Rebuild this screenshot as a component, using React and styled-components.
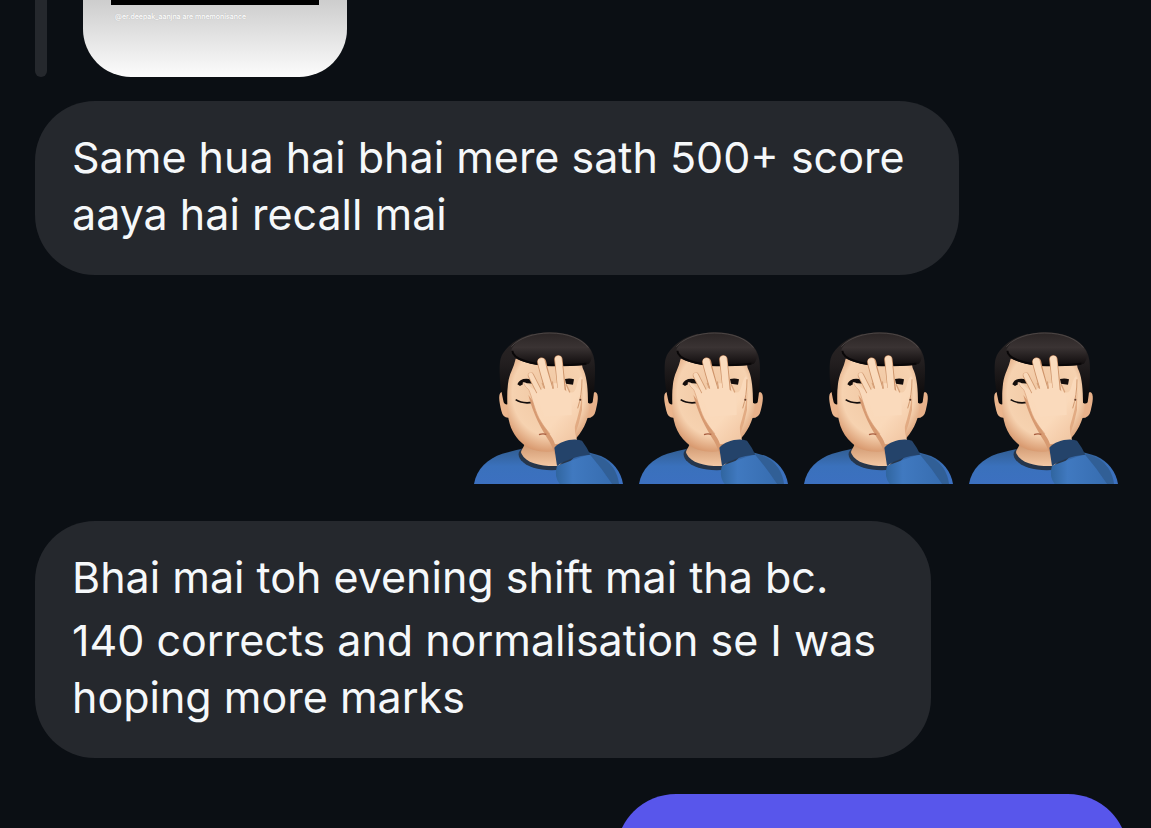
import React, { useId } from 'react'
import styled, { createGlobalStyle } from 'styled-components'

const GlobalStyle = createGlobalStyle`
    * {
        box-sizing: border-box;
    }
    body {
        margin: 0;
        background-color: #0B0F14;
        font-family: Inter, 'Liberation Sans', sans-serif;
    }
`
const Chat = styled.main`
    display: flex;
    flex-direction: column;
    height: 100vh;
    overflow: hidden;
    padding: 0 23px 0 35px;
`
const Quote = styled.div`
    display: flex;
    flex-shrink: 0;
    gap: 36px;
    height: 77px;
    margin-bottom: 24px;
`
const QuoteBar = styled.div`
    width: 12px;
    border-radius: 0 0 6px 6px;
    background-color: #25282D;
`
const Preview = styled.figure`
    width: 264px;
    margin: 0;
    padding: 0 28px;
    border-radius: 0 0 48px 48px;
    background: linear-gradient(#CDCDCD, #FCFCFC);
`
const PreviewImage = styled.div`
    height: 5px;
    background-color: #000000;
`
const Caption = styled.figcaption`
    padding: 6px 4px;
    font-size: 7px;
    font-weight: 500;
    line-height: 12px;
    color: #FFFFFF;
    text-shadow: 0 0 1px #AAAAAA;
    white-space: nowrap;
`
const Bubble = styled.div`
    flex-shrink: 0;
    align-self: ${({ $sent }) => ($sent ? 'flex-end' : 'flex-start')};
    max-width: 100%;
    padding: 28px 55px 32px 37px;
    border-radius: 60px;
    background-color: ${({ $sent }) => ($sent ? '#5856EB' : '#25282D')};
`
const SentBubble = styled(Bubble)`
    width: 512px;
    height: 174px;
    margin-top: 36px;
`
const Text = styled.p`
    margin: 0;
    font-size: 43px;
    line-height: 57px;
    color: #F5F8FA;
    white-space: pre-line;
    & + & {
        margin-top: 6px;
    }
`
const Reactions = styled.div`
    display: flex;
    flex-shrink: 0;
    justify-content: flex-end;
    gap: 15px;
    padding: 57px 9px 37px 0;
`

const Facepalm = () => {
    const id = useId()
    const fill = name => `url(#${id}${name})`

    return (
        <svg width="150" height="152" viewBox="27 36 450 456" role="img" aria-label="Facepalm">
            <defs>
                <radialGradient id={`${id}face`} cx="0.5" cy="0.4" r="0.62">
                    <stop offset="0" stopColor="#F0C7A2" />
                    <stop offset="0.7" stopColor="#F6D2B0" />
                    <stop offset="1" stopColor="#D6956A" />
                </radialGradient>
                <linearGradient id={`${id}neck`} x1="0" y1="0" x2="0" y2="1">
                    <stop offset="0" stopColor="#C98E65" />
                    <stop offset="1" stopColor="#F3C8A4" />
                </linearGradient>
                <linearGradient id={`${id}hand`} x1="0" y1="0" x2="1" y2="1">
                    <stop offset="0" stopColor="#FADABC" />
                    <stop offset="0.6" stopColor="#FAD9BA" />
                    <stop offset="1" stopColor="#EFC19C" />
                </linearGradient>
                <linearGradient id={`${id}hair`} x1="0" y1="0" x2="0" y2="1">
                    <stop offset="0" stopColor="#2B2525" />
                    <stop offset="0.45" stopColor="#3A3333" />
                    <stop offset="1" stopColor="#0D0A0B" />
                </linearGradient>
                <linearGradient id={`${id}side`} x1="0" y1="0" x2="0" y2="1">
                    <stop offset="0" stopColor="#2A2525" />
                    <stop offset="0.4" stopColor="#231F20" />
                    <stop offset="1" stopColor="#080607" />
                </linearGradient>
                <linearGradient id={`${id}shirt`} x1="0" y1="0" x2="0" y2="1">
                    <stop offset="0" stopColor="#315D91" />
                    <stop offset="0.5" stopColor="#3A71BC" />
                    <stop offset="1" stopColor="#3C70C0" />
                </linearGradient>
                <linearGradient id={`${id}sleeve`} x1="0" y1="0" x2="1" y2="0">
                    <stop offset="0" stopColor="#30659F" />
                    <stop offset="0.3" stopColor="#4079C0" />
                    <stop offset="1" stopColor="#376DB0" />
                </linearGradient>
            </defs>
            {/* shirt and neck */}
            <path d="M27 492 C35 446 68 416 112 401 Q145 392 180 385 L330 387 Q375 398 408 408 C445 424 468 456 474 492 Z" fill={fill('shirt')} />
            <path d="M180 382 C158 390 156 405 168 421 C190 446 235 454 290 449 L340 400 Z" fill="#26364B" />
            <path d="M178 360 C184 382 162 390 170 402 C184 431 230 440 282 438 L330 380 Z" fill={fill('neck')} />
            {/* ears */}
            <path d="M110 216 C97 221 104 250 109 272 Q114 295 132 293 L136 230 Z" fill="#EBB58D" />
            <path d="M390 216 C404 219 398 250 392 272 Q388 294 366 294 L368 230 Z" fill="#E8B18A" />
            {/* face */}
            <path d="M146 102 C128 150 125 197 126 245 C126 300 138 340 170 368 C190 387 216 395 246 395 C310 395 374 334 375 245 C375 188 370 144 352 110 Z" fill={fill('face')} />
            {/* hair */}
            <path d="M204 41 C160 52 132 72 114 100 C105 114 104 130 104 150 C103 184 110 219 116 247 Q119 255 127 253 C126 211 127 180 140 152 Q148 134 152 116 L200 100 Z" fill={fill('side')} />
            <path d="M300 41 C345 51 370 72 380 94 C388 110 390 130 390 150 C390 187 388 216 383 247 Q377 254 369 248 C369 209 366 176 357 153 Q352 145 351 134 L310 100 Z" fill={fill('side')} />
            <path d="M139 91 C152 55 203 37 255 37 C313 37 358 58 377 91 Q386 114 372 131 C345 139 307 136 263 138 C220 139 171 126 150 114 Q140 105 139 91 Z" fill={fill('hair')} />
            <path d="M142 92 C143 118 202 134 260 136 Q320 136 364 131" fill="none" stroke="#090708" strokeWidth="6" />
            <path d="M139 80 C160 55 205 39 254 39 C309 39 350 57 370 83" fill="none" stroke="#5C5654" strokeWidth="2" />
            {/* eyes and mouth */}
            <path d="M157 193 Q163 176 184 176 Q201 177 206 183 L206 192 Q187 188 175 192 L165 198 Z" fill="#130D0C" />
            <path d="M300 177 Q315 174 327 178 L324 194 L303 191 Z" fill="#130D0C" />
            <path d="M152 239 Q172 252 202 247" fill="none" stroke="#130D0C" strokeWidth="5" />
            {/* shade under the palm */}
            <path d="M190 225 C206 287 230 327 244 350 Q261 374 270 405 L284 380 L260 320 Z" fill="#D79A71" />
            <path d="M222 344 Q232 340 244 343" fill="none" stroke="#A75C3E" strokeWidth="4" />
            <path d="M352 200 C352 250 338 288 329 323 L328 350 Q344 308 351 270 Z" fill="#E2AB83" />
            {/* hand: thumb side first, then the fingers over it */}
            <path d="M270 373 C264 349 238 325 222 295 C206 264 202 226 188 208 Q167 190 175 187 Q184 186 200 204 L214 212 L234 205 L264 190 L302 189 L316 217 Q329 222 335 197 Q341 173 348 169 Q354 174 351 204 C348 245 331 288 329 321 Q329 344 337 362 Z" fill={fill('hand')} />
            <g fill="none" strokeLinecap="round">
                <path d="M198 167 L226 222" stroke="#D39C73" strokeWidth="19" />
                <path d="M197 165 L226 222" stroke="#F9D9BA" strokeWidth="14" />
                <path d="M230 126 C236 155 246 183 254 218" stroke="#CE946A" strokeWidth="27" />
                <path d="M229 125 C235 155 246 183 256 222" stroke="#FADBBD" strokeWidth="21" />
                <path d="M280 118 C284 150 286 180 292 218" stroke="#CE946A" strokeWidth="25" />
                <path d="M280 117 C284 150 286 180 290 222" stroke="#FADBBD" strokeWidth="20" />
            </g>
            <path d="M212 222 Q236 196 262 207 Q290 196 320 226 L320 285 L238 290 Z" fill="#FADABC" />
            <path d="M262 186 L265 204 M232 190 L238 204 M304 194 L314 216" fill="none" stroke="#D7A27A" strokeWidth="4" strokeLinecap="round" />
            <path d="M175 188 Q180 202 191 209 C201 231 207 264 222 295 Q234 318 255 342" fill="none" stroke="#D99F75" strokeWidth="2" />
            <path d="M351 178 Q351 225 338 265" fill="none" stroke="#D29A70" strokeWidth="3" />
            <circle cx="346" cy="239" r="3" fill="#5A3829" />
            {/* sleeve */}
            <path d="M276 437 Q266 469 284 492 L441 492 Q410 445 374 402 Z" fill={fill('sleeve')} />
            <path d="M374 402 Q420 409 445 444 Q459 466 462 492 L441 492 Q410 445 374 402" fill="#315F96" />
            <path d="M268 383 C286 362 326 353 351 362 Q366 382 376 404 Q315 409 276 438 Z" fill="#24436A" />
        </svg>
    )
}

const App = () => (
    <>
        <GlobalStyle />
        <Chat>
            <Quote>
                <QuoteBar />
                <Preview>
                    <PreviewImage />
                    <Caption>@er.deepak_aanjna are mnemonisance</Caption>
                </Preview>
            </Quote>
            <Bubble>
                <Text>{'Same hua hai bhai mere sath 500+ score\naaya hai recall mai'}</Text>
            </Bubble>
            <Reactions>
                {[1, 2, 3, 4].map(n => <Facepalm key={n} />)}
            </Reactions>
            <Bubble>
                <Text>Bhai mai toh evening shift mai tha bc.</Text>
                <Text>{'140 corrects and normalisation se I was\nhoping more marks'}</Text>
            </Bubble>
            <SentBubble $sent />
        </Chat>
    </>
)

export default App
